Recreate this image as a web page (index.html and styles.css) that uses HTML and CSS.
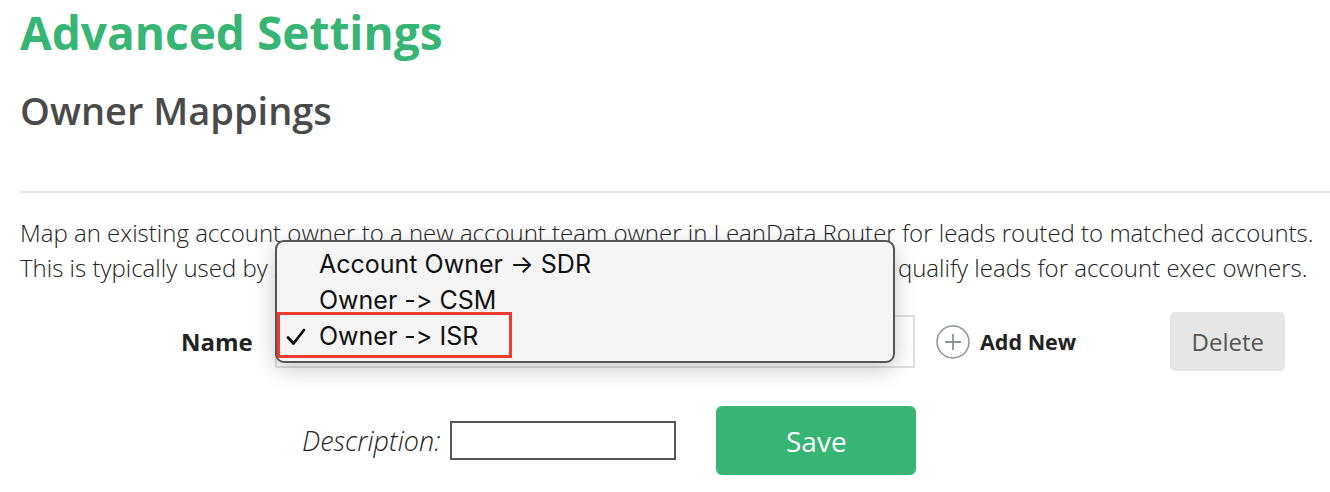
FILE: index.html
```html
<!DOCTYPE html>
<html lang="en">
<head>
    <meta charset="UTF-8">
    <meta name="viewport" content="width=device-width, initial-scale=1.0">
    <title>Advanced Settings</title>
    <link rel="stylesheet" href="styles.css">
</head>
<body>
    <div class="page">
        <h1 class="page-title">Advanced Settings</h1>
        <h2 class="section-title">Owner Mappings</h2>
        <div class="divider"></div>

        <p class="intro">
            Map an existing account owner to a new account team owner in LeanData Router for leads routed to matched accounts.<br>
            This is typically used by sales development reps and inside sales rep who need to qualify leads for account exec owners.
        </p>

        <div class="form-row name-row">
            <label class="name-label" for="mappingSelect">Name</label>
            <div class="select-wrap">
                <div class="fake-select" id="mappingSelect"></div>
                <!-- open native dropdown -->
                <div class="dropdown">
                    <div class="dropdown-item">Account Owner &rarr; SDR</div>
                    <div class="dropdown-item">Owner -&gt; CSM</div>
                    <div class="dropdown-item selected">
                        <svg class="check" width="20" height="18" viewBox="0 0 20 18">
                            <path d="M2 9.5 L7.5 15.5 L18 2" fill="none" stroke="#111" stroke-width="2.8" stroke-linecap="round" stroke-linejoin="round"/>
                        </svg>
                        Owner -&gt; ISR
                    </div>
                    <div class="highlight"></div>
                </div>
            </div>
            <button class="add-new">
                <svg width="34" height="34" viewBox="0 0 34 34">
                    <circle cx="17" cy="17" r="16" fill="none" stroke="#8b939b" stroke-width="1.5"/>
                    <path d="M17 9 V25 M9 17 H25" stroke="#8b939b" stroke-width="1.8"/>
                </svg>
                <span>Add New</span>
            </button>
            <button class="delete-button">Delete</button>
        </div>

        <div class="form-row desc-row">
            <label class="desc-label" for="descInput">Description:</label>
            <input class="desc-input" id="descInput" type="text">
            <button class="save-button">Save</button>
        </div>
    </div>
</body>
</html>
```

FILE: styles.css
```css
body {
    margin: 0;
    font-family: "Open Sans", sans-serif;
    color: #222;
    background: #fff;
    overflow: hidden;
}
.page {
    padding-left: 20px;
}
.page-title {
    margin: 0;
    padding-top: 2px;
    font-size: 46px;
    line-height: 60px;
    font-weight: 700;
    color: #36b574;
}
.section-title {
    margin: 23px 0 0;
    font-size: 38px;
    line-height: 50px;
    font-weight: 600;
    color: #4a4a4a;
}
.divider {
    margin-top: 56px;
    border-top: 2px solid #e6e6e6;
}
.intro {
    margin: 22px 0 0;
    font-size: 24px;
    line-height: 35px;
    font-weight: 300;
    color: #222;
    white-space: nowrap;
}
.form-row {
    display: flex;
    align-items: center;
}
.name-row {
    margin-top: 27px;
    padding-left: 161px;
}
.name-label {
    font-size: 24px;
    font-weight: 700;
    width: 94px;
}
.select-wrap {
    position: relative;
    width: 640px;
}
.fake-select {
    height: 49px;
    border: 2px solid #e0e0e0;
    background: #fff;
}
.dropdown {
    position: absolute;
    left: 0;
    top: -75px;
    width: 616px;
    padding: 4px 0 7px;
    background: #f5f5f5;
    border: 2px solid #555;
    border-radius: 9px;
    box-shadow: 0 6px 22px rgba(0, 0, 0, 0.22);
    font-family: Inter, "Liberation Sans", sans-serif;
    font-feature-settings: "calt" 0, "liga" 0;
    font-size: 25px;
    color: #111;
}
.dropdown-item {
    position: relative;
    height: 36px;
    line-height: 36px;
    padding-left: 42px;
}
.check {
    position: absolute;
    left: 9px;
    top: 10px;
}
.highlight {
    position: absolute;
    left: 0;
    top: 70px;
    width: 229px;
    height: 40px;
    border: 3px solid #f03a2e;
}
.add-new {
    display: flex;
    align-items: center;
    gap: 10px;
    margin-left: 21px;
    padding: 0;
    border: none;
    background: none;
    font-family: "Open Sans", sans-serif;
    font-size: 21.5px;
    font-weight: 700;
    color: #222;
}
.delete-button {
    margin-left: 94px;
    width: 115px;
    height: 59px;
    border: none;
    border-radius: 5px;
    background: #e6e6e6;
    color: #555;
    font-family: "Open Sans", sans-serif;
    font-size: 24px;
}
.desc-row {
    margin-top: 35px;
    padding-left: 282px;
}
.desc-label {
    font-size: 27px;
    font-style: italic;
    font-weight: 300;
    margin-right: 10px;
}
.desc-input {
    width: 222px;
    height: 35px;
    padding: 0;
    border: 2px solid #555;
    box-sizing: content-box;
}
.save-button {
    margin-left: 40px;
    width: 200px;
    height: 69px;
    border: none;
    border-radius: 6px;
    background: #36b574;
    color: #fff;
    font-family: "Open Sans", sans-serif;
    font-size: 28px;
}
```
